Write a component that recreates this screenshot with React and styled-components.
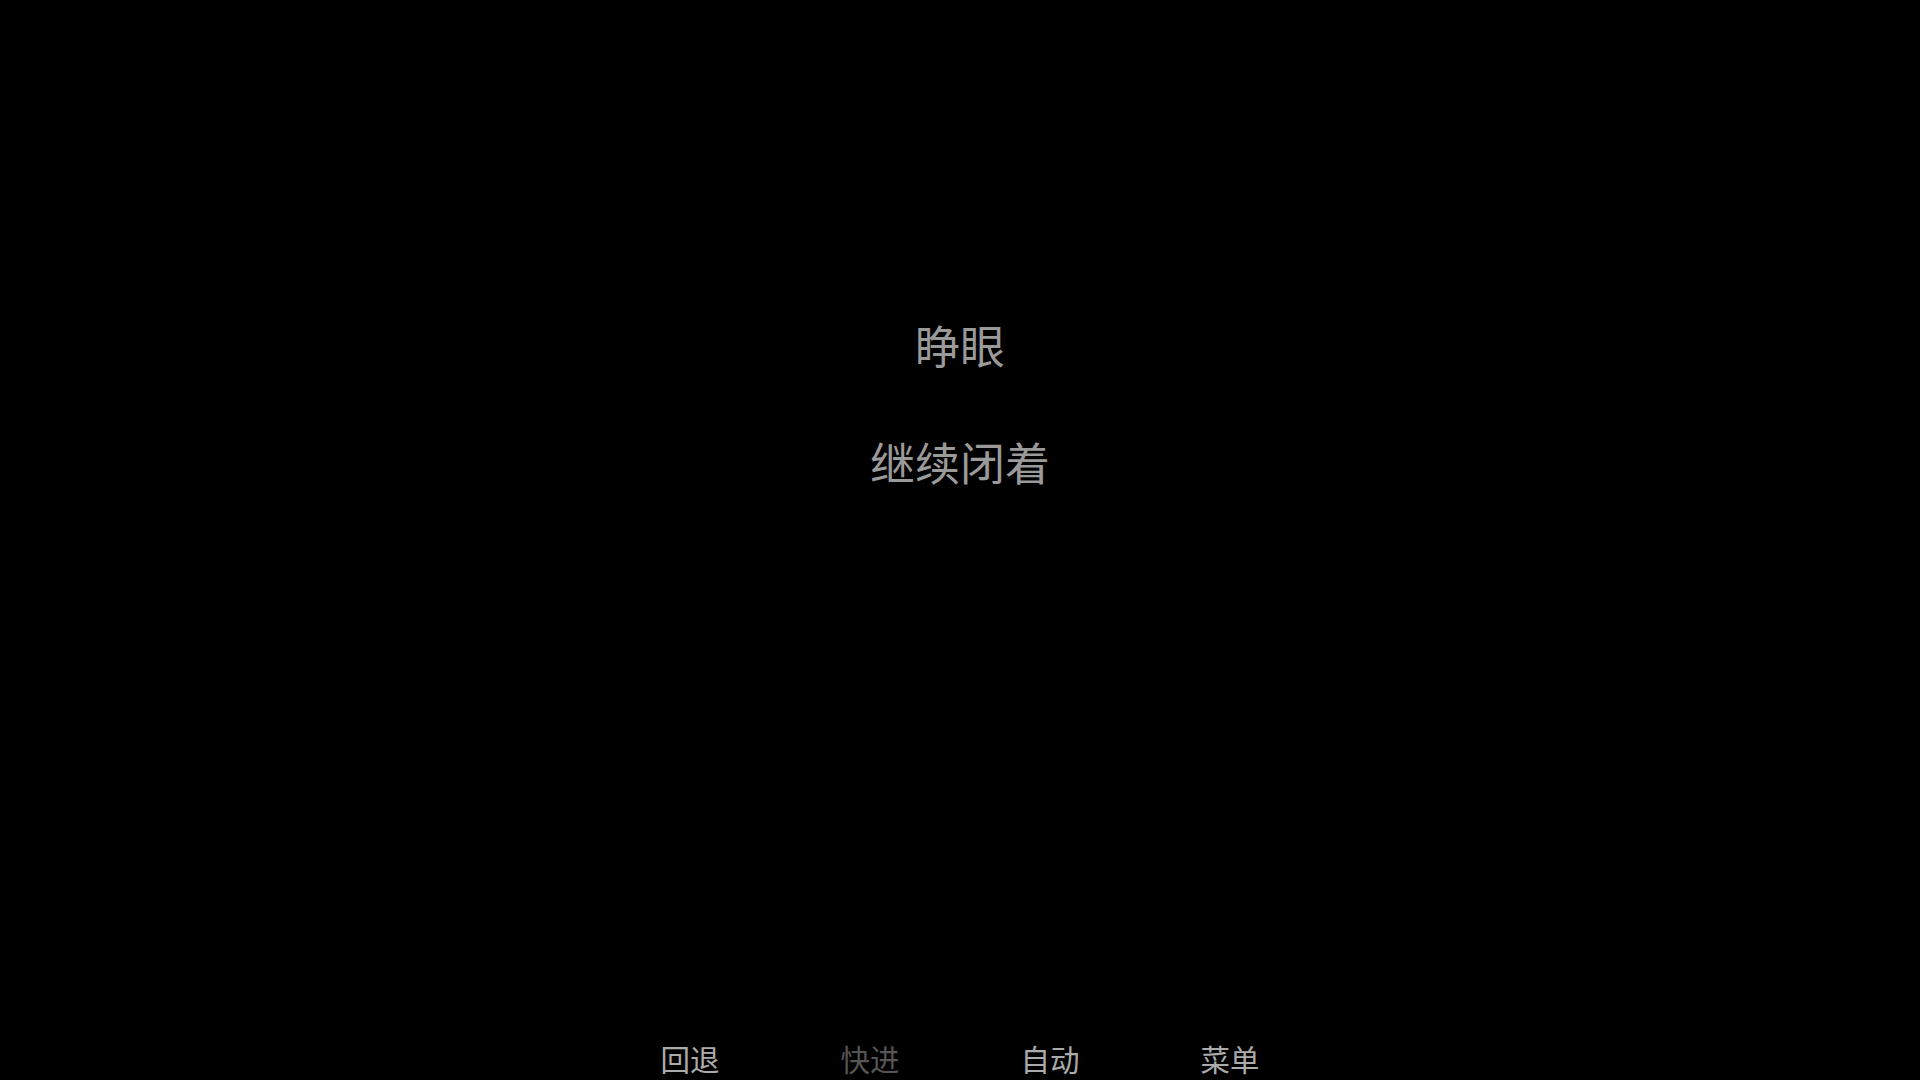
import React from 'react';
import styled, { createGlobalStyle } from 'styled-components';

const GlobalStyle = createGlobalStyle`
  html, body {
    margin: 0;
    padding: 0;
    background: #000;
  }
  body {
    font-family: "Noto Sans CJK SC", "Noto Sans", sans-serif;
  }
`;

const Screen = styled.main`
  width: 100vw;
  height: 100vh;
  background-color: #000;
  display: flex;
  flex-direction: column;
  overflow: hidden;
`;

const ChoiceList = styled.div`
  flex: 1;
  display: flex;
  flex-direction: column;
  align-items: center;
  gap: 57px;
  padding-top: 315px;
`;

const Choice = styled.button`
  background: none;
  border: none;
  padding: 0;
  font-family: inherit;
  font-size: 45px;
  line-height: 60px;
  color: #9a9a9a;
  cursor: pointer;
  &:hover {
    color: #d0d0d0;
  }
`;

const QuickMenu = styled.nav`
  display: flex;
  justify-content: center;
  padding-bottom: 4px;
`;

const QuickButton = styled.button`
  width: 180px;
  background: none;
  border: none;
  padding: 0;
  font-family: inherit;
  font-size: 29.5px;
  line-height: 36px;
  color: ${(p) => (p.disabled ? '#555555' : '#ababab')};
  cursor: ${(p) => (p.disabled ? 'default' : 'pointer')};
`;

const choices = ['睁眼', '继续闭着'];

const quickItems = [
  { label: '回退' },
  { label: '快进', disabled: true },
  { label: '自动' },
  { label: '菜单' },
];

export default function App() {
  return (
    <>
      <GlobalStyle />
      <Screen>
        <ChoiceList>
          {choices.map((c) => (
            <Choice key={c}>{c}</Choice>
          ))}
        </ChoiceList>
        <QuickMenu>
          {quickItems.map((item) => (
            <QuickButton key={item.label} disabled={item.disabled}>
              {item.label}
            </QuickButton>
          ))}
        </QuickMenu>
      </Screen>
    </>
  );
}
